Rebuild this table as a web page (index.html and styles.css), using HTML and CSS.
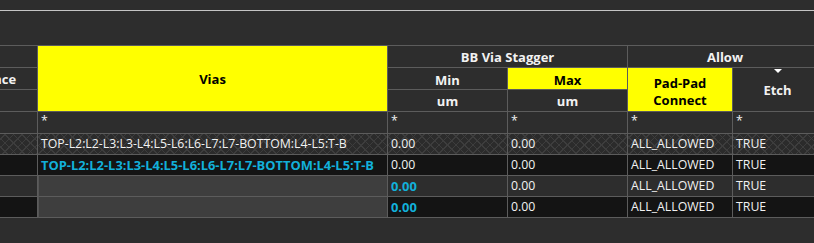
FILE: index.html
```html
<!DOCTYPE html>
<html lang="en">
<head>
    <meta charset="UTF-8">
    <title>Via Rules</title>
    <link rel="stylesheet" href="styles.css">
</head>
<body>
<div class="toolbar"></div>
<div class="grid-wrap">
    <table class="grid">
        <colgroup>
            <col class="c-name">
            <col class="c-vias">
            <col class="c-num">
            <col class="c-num">
            <col class="c-pad">
            <col class="c-etch">
        </colgroup>
        <thead>
        <tr>
            <th></th>
            <th rowspan="3" class="hl">Vias</th>
            <th colspan="2">BB Via Stagger</th>
            <th colspan="2">Allow</th>
        </tr>
        <tr>
            <th>Distance</th>
            <th class="low">Min</th>
            <th class="hl low">Max</th>
            <th rowspan="2" class="hl two-line">Pad-Pad<br>Connect</th>
            <th rowspan="2" class="sorted">Etch</th>
        </tr>
        <tr>
            <th></th>
            <th>um</th>
            <th>um</th>
        </tr>
        </thead>
        <tbody>
        <tr class="filter">
            <td></td>
            <td>*</td>
            <td>*</td>
            <td>*</td>
            <td>*</td>
            <td>*</td>
        </tr>
        <tr class="hatched">
            <td></td>
            <td>TOP-L2:L2-L3:L3-L4:L5-L6:L6-L7:L7-BOTTOM:L4-L5:T-B</td>
            <td>0.00</td>
            <td>0.00</td>
            <td>ALL_ALLOWED</td>
            <td>TRUE</td>
        </tr>
        <tr class="dark">
            <td></td>
            <td class="set">TOP-L2:L2-L3:L3-L4:L5-L6:L6-L7:L7-BOTTOM:L4-L5:T-B</td>
            <td>0.00</td>
            <td>0.00</td>
            <td>ALL_ALLOWED</td>
            <td>TRUE</td>
        </tr>
        <tr>
            <td></td>
            <td class="off"></td>
            <td class="set">0.00</td>
            <td>0.00</td>
            <td>ALL_ALLOWED</td>
            <td>TRUE</td>
        </tr>
        <tr class="dark">
            <td></td>
            <td class="off"></td>
            <td class="set">0.00</td>
            <td>0.00</td>
            <td>ALL_ALLOWED</td>
            <td>TRUE</td>
        </tr>
        </tbody>
    </table>
</div>
</body>
</html>
```

FILE: styles.css
```css
body {
    margin: 0;
    background-color: #2d2d2d;
    color: #f2f2f2;
    font-family: "Open Sans", "Noto Sans", sans-serif;
    font-size: 13px;
    overflow: hidden;
}

.toolbar {
    height: 10px;
    border-bottom: 1px solid #c4c4c4;
    margin-bottom: 34px;
}

.grid-wrap {
    margin-left: -61px;
}

.grid {
    border-collapse: separate;
    border-spacing: 0;
    table-layout: fixed;
    width: 884px;
    border-top: 1px solid #5c5c5c;
}

.c-name {
    width: 99px;
}

.c-vias {
    width: 350px;
}

.c-num {
    width: 120px;
}

.c-pad {
    width: 105px;
}

.c-etch {
    width: 90px;
}

.grid th,
.grid td {
    border-right: 1px solid #5c5c5c;
    border-bottom: 1px solid #5c5c5c;
    padding: 0 3px;
    white-space: nowrap;
    overflow: hidden;
}

.grid th {
    height: 21px;
    font-weight: bold;
    text-align: center;
    line-height: 16px;
    position: relative;
}

.grid th.hl {
    background-color: #ffff00;
    color: #000;
}

.grid th.low {
    padding-top: 3px;
    height: 18px;
}

.grid th.two-line {
    line-height: 17px;
    padding-top: 4px;
}

/* little arrow over the sorted column */
.grid th.sorted::before {
    content: "";
    position: absolute;
    top: 1px;
    left: 41px;
    border-left: 4px solid transparent;
    border-right: 4px solid transparent;
    border-top: 4px solid #fff;
}

.grid td {
    height: 20px;
    line-height: 18px;
    font-size: 12.3px;
    text-align: left;
}

.filter td {
    height: 21px;
    vertical-align: top;
    line-height: 17px;
}

.hatched td {
    background-color: #2b2b2b;
    background-image: repeating-linear-gradient(45deg, #3d3d3d 0 1px, transparent 1px 6px),
    repeating-linear-gradient(-45deg, #3d3d3d 0 1px, transparent 1px 6px);
}

.dark td {
    background-color: #141414;
}

.grid td.set {
    color: #12b0da;
    font-weight: bold;
    font-size: 12.9px;
}

.grid td.off {
    background-color: #3e3e3e;
    border-left: 1px solid #555;
}
```
